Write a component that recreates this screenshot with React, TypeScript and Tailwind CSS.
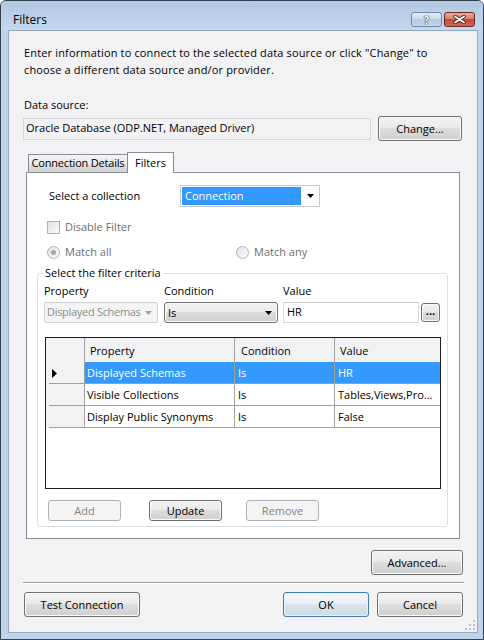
import React from 'react';

// Win7-style "Filters" dialog (data source connection filters)

const rows = [
  ['Displayed Schemas', 'Is', 'HR'],
  ['Visible Collections', 'Is', 'Tables,Views,Pro...'],
  ['Display Public Synonyms', 'Is', 'False'],
];

function Arrow({ color = '#000' }: { color?: string }) {
  return (
    <svg width="7" height="4" viewBox="0 0 7 4" className="shrink-0">
      <path d="M0 0h7L3.5 4z" fill={color} />
    </svg>
  );
}

function Btn({
  children,
  className = '',
  disabled = false,
  focused = false,
}: {
  children: React.ReactNode;
  className?: string;
  disabled?: boolean;
  focused?: boolean;
}) {
  const look = disabled
    ? 'border-[#adb2b5] bg-[#f4f4f4] text-[#838383]'
    : focused
      ? 'border-[#3c7fb1] bg-[linear-gradient(#f4f8fb,#e9f0f6_45%,#dae3eb_50%,#d0dae3)] shadow-[inset_0_0_0_1px_#e3f3fb]'
      : 'border-[#707070] bg-[linear-gradient(#f2f2f2,#ebebeb_45%,#dddddd_50%,#cfcfcf)] shadow-[inset_0_0_0_1px_#fbfbfb]';
  return (
    <div className={`flex shrink-0 items-center justify-center rounded-[3px] border leading-none ${look} ${className}`}>
      {children}
    </div>
  );
}

function Radio({ checked = false }: { checked?: boolean }) {
  return (
    <span className="flex h-[13px] w-[13px] shrink-0 items-center justify-center rounded-full border border-[#b1b1b1] bg-[linear-gradient(135deg,#e2e2e2,#fbfbfb)]">
      {checked && <span className="h-[5px] w-[5px] rounded-full bg-[#a8a8a8]" />}
    </span>
  );
}

export default function App() {
  return (
    <div className="h-[640px] w-[484px] bg-white font-['Open_Sans',sans-serif] text-[11px] text-black">
      <div className="flex h-[640px] w-[484px] flex-col rounded-t-[6px] border border-[#33404e] bg-[#bfd4eb]">
        {/* title bar */}
        <div className="flex h-[29px] items-start rounded-t-[5px] bg-[linear-gradient(#b2c8e2,#c4d8ed)]">
          <span className="ml-[12px] mt-[11px] text-[12px] leading-[16px]">Filters</span>
          <div className="ml-auto mr-[8px] mt-[11px] flex gap-[2px]">
            <div className="flex h-[15px] w-[31px] items-center justify-center rounded-[3px] border border-[#6e8bab] bg-[linear-gradient(#e3ecf6,#c9d9ea_50%,#b5c9e0_50%,#c4d6ea)] text-[11px] font-bold leading-none text-white [text-shadow:0_0_1px_#2a405a,0_0_1px_#2a405a,0_0_1px_#2a405a]">
              ?
            </div>
            <div className="flex h-[15px] w-[31px] items-center justify-center rounded-[3px] border border-[#6b2a22] bg-[linear-gradient(#e9ab9c,#d47f6d_50%,#c24a33_50%,#cf6b52)]">
              <svg width="13" height="9" viewBox="0 0 13 9">
                <path d="M2 1.5l9 6M11 1.5l-9 6" stroke="#4a1d17" strokeWidth="3.4" strokeLinecap="round" />
                <path d="M2 1.5l9 6M11 1.5l-9 6" stroke="#fff" strokeWidth="1.8" strokeLinecap="round" />
              </svg>
            </div>
          </div>
        </div>

        {/* client area */}
        <div className="relative ml-[7px] h-[603px] w-[470px] border border-[#95a8bd] bg-[#f2f1f4] px-[14px] pt-[13px]">
          <p className="ml-[1px] leading-[17px] tracking-[0.15px]">
            Enter information to connect to the selected data source or click "Change" to
            <br />
            choose a different data source and/or provider.
          </p>

          <div className="ml-[1px] mt-[18px] leading-[17px]">Data source:</div>
          <div className="mt-[3px] flex items-center gap-[7px]">
            <div className="flex h-[22px] w-[348px] items-center border border-[#d6d6d8] bg-[#f2f1f4] pl-[2px]">
              Oracle Database (ODP.NET, Managed Driver)
            </div>
            <Btn className="h-[25px] w-[84px]">Change...</Btn>
          </div>

          {/* tabs */}
          <div className="ml-[3px] mt-[11px] w-[434px]">
            <div className="flex h-[20px] items-end pl-[2px]">
              <div className="flex h-[18px] w-[100px] items-center justify-center whitespace-nowrap border border-b-0 border-[#898c95] bg-[linear-gradient(#f3f3f3,#ebebeb_50%,#dedede_50%,#d3d3d3)] tracking-[-0.2px]">
                Connection Details
              </div>
              <div className="relative z-10 -mb-px -ml-px flex h-[21px] w-[47px] items-start justify-center border border-b-0 border-[#898c95] bg-white pt-[2px]">
                Filters
              </div>
            </div>
            <div className="h-[367px] border border-[#898c95] bg-white">
              <div className="flex items-center pt-[12px]">
                <span className="w-[153px] pl-[22px]">Select a collection</span>
                <div className="flex h-[22px] w-[140px] items-center border border-[#c9c9cc] bg-white p-[1px]">
                  <div className="flex h-[18px] w-[119px] items-center bg-[#3399ff] pl-[3px] text-white">Connection</div>
                  <span className="ml-auto mr-[4px] flex">
                    <Arrow />
                  </span>
                </div>
              </div>

              <div className="mt-[12px] flex h-[17px] items-center gap-[5px] pl-[20px]">
                <span className="h-[13px] w-[13px] border border-[#b1b1b1] bg-[linear-gradient(135deg,#e2e2e2,#fbfbfb)]" />
                <span className="text-[#6d6d6d]">Disable Filter</span>
              </div>

              <div className="mt-[8px] flex h-[17px] items-center pl-[20px] text-[#6d6d6d]">
                <div className="flex w-[189px] items-center gap-[5px]">
                  <Radio checked />
                  <span>Match all</span>
                </div>
                <div className="flex items-center gap-[5px]">
                  <Radio />
                  <span>Match any</span>
                </div>
              </div>

              {/* filter criteria group */}
              <fieldset className="ml-[10px] mt-[4px] h-[262px] w-[411px] rounded-[3px] border border-[#d5dfe5]">
                <legend className="ml-[5px] px-[2px] leading-[16px]">Select the filter criteria</legend>

                <div className="mt-[2px] flex leading-[16px]">
                  <span className="ml-[6px] w-[120px]">Property</span>
                  <span className="w-[119px]">Condition</span>
                  <span>Value</span>
                </div>

                <div className="mt-[3px] flex items-start">
                  <div className="ml-[6px] flex h-[21px] w-[114px] items-center overflow-hidden whitespace-nowrap rounded-[2px] border border-[#d0d0d3] bg-[#f4f4f4] pl-[2px] pr-[5px] text-[#8d8d8d]">
                    <span className="tracking-[-0.3px]">Displayed Schemas</span>
                    <span className="ml-auto flex pl-[2px]">
                      <Arrow color="#a3a3a3" />
                    </span>
                  </div>
                  <Btn className="ml-[6px] h-[21px] w-[114px] !justify-start pl-[3px] pr-[5px]">
                    <span>Is</span>
                    <span className="ml-auto flex">
                      <Arrow />
                    </span>
                  </Btn>
                  <div className="ml-[5px] flex h-[21px] w-[136px] items-center border border-[#dadadd] border-t-[#c9c9cd] bg-white pl-[3px]">
                    HR
                  </div>
                  <Btn className="ml-[2px] mt-[1px] h-[19px] w-[19px] items-end pb-[5px] font-bold">
                    <span className="leading-none">...</span>
                  </Btn>
                </div>

                {/* data grid */}
                <div className="ml-[7px] mt-[14px] h-[152px] w-[396px] border border-[#1e1e1e] bg-white">
                  <div className="flex h-[24px] bg-[#f2f1f4]">
                    <div className="w-[39px] border-r border-[#a0a0a0]" />
                    <div className="w-[150px] border-r border-[#a0a0a0] pl-[5px] pt-[5px]">Property</div>
                    <div className="w-[100px] border-r border-[#a0a0a0] pl-[6px] pt-[5px]">Condition</div>
                    <div className="flex-1 pl-[5px] pt-[5px]">Value</div>
                  </div>
                  {rows.map((r, i) => {
                    const sel = i === 0;
                    return (
                      <div key={r[0]} className="flex h-[22px]">
                        <div className="flex w-[39px] flex-col border-r border-[#a0a0a0] bg-[#f2f1f4]">
                          <div className="flex flex-1 items-center pl-[6px] pt-[1px]">
                            {sel && (
                              <svg width="5" height="9" viewBox="0 0 5 9">
                                <path d="M0 0l5 4.5L0 9z" fill="#000" />
                              </svg>
                            )}
                          </div>
                          <div className="ml-[3px] h-px bg-[#a0a0a0]" />
                        </div>
                        <div className={`flex w-[150px] items-center border-b border-r border-[#a0a0a0] pl-[2px] pt-[2px] ${sel ? 'bg-[#3399ff] text-white' : ''}`}>
                          {r[0]}
                        </div>
                        <div className={`flex w-[100px] items-center border-b border-r border-[#a0a0a0] pl-[3px] pt-[2px] ${sel ? 'bg-[#3399ff] text-white' : ''}`}>
                          {r[1]}
                        </div>
                        <div className={`flex flex-1 items-center overflow-hidden whitespace-nowrap border-b border-[#a0a0a0] pl-[3px] pt-[2px] ${sel ? 'bg-[#3399ff] text-white' : ''}`}>
                          {r[2]}
                        </div>
                      </div>
                    );
                  })}
                </div>

                <div className="mt-[11px] flex">
                  <Btn disabled className="ml-[10px] h-[21px] w-[73px]">Add</Btn>
                  <Btn className="ml-[28px] h-[21px] w-[73px]">Update</Btn>
                  <Btn disabled className="ml-[24px] h-[21px] w-[73px]">Remove</Btn>
                </div>
              </fieldset>
            </div>
          </div>

          <div className="mt-[11px] flex justify-end">
            <Btn className="h-[25px] w-[92px]">Advanced...</Btn>
          </div>

          <div className="mt-[7px] h-[2px] w-[441px] border-b border-t border-b-white border-t-[#a0a0a0]" />

          <div className="mt-[8px] flex">
            <Btn className="ml-[1px] h-[25px] w-[116px]">Test Connection</Btn>
            <Btn focused className="ml-auto h-[25px] w-[86px]">OK</Btn>
            <Btn className="ml-[8px] h-[25px] w-[86px]">Cancel</Btn>
          </div>

          {/* size grip */}
          <svg width="11" height="11" viewBox="0 0 11 11" className="absolute bottom-[2px] right-[2px]">
            {[
              [8, 0],
              [8, 4],
              [4, 4],
              [8, 8],
              [4, 8],
              [0, 8],
            ].map(([x, y]) => (
              <rect key={`${x}-${y}`} x={x + 1} y={y + 1} width="2" height="2" fill="#b8c4d2" />
            ))}
          </svg>
        </div>
      </div>
    </div>
  );
}
